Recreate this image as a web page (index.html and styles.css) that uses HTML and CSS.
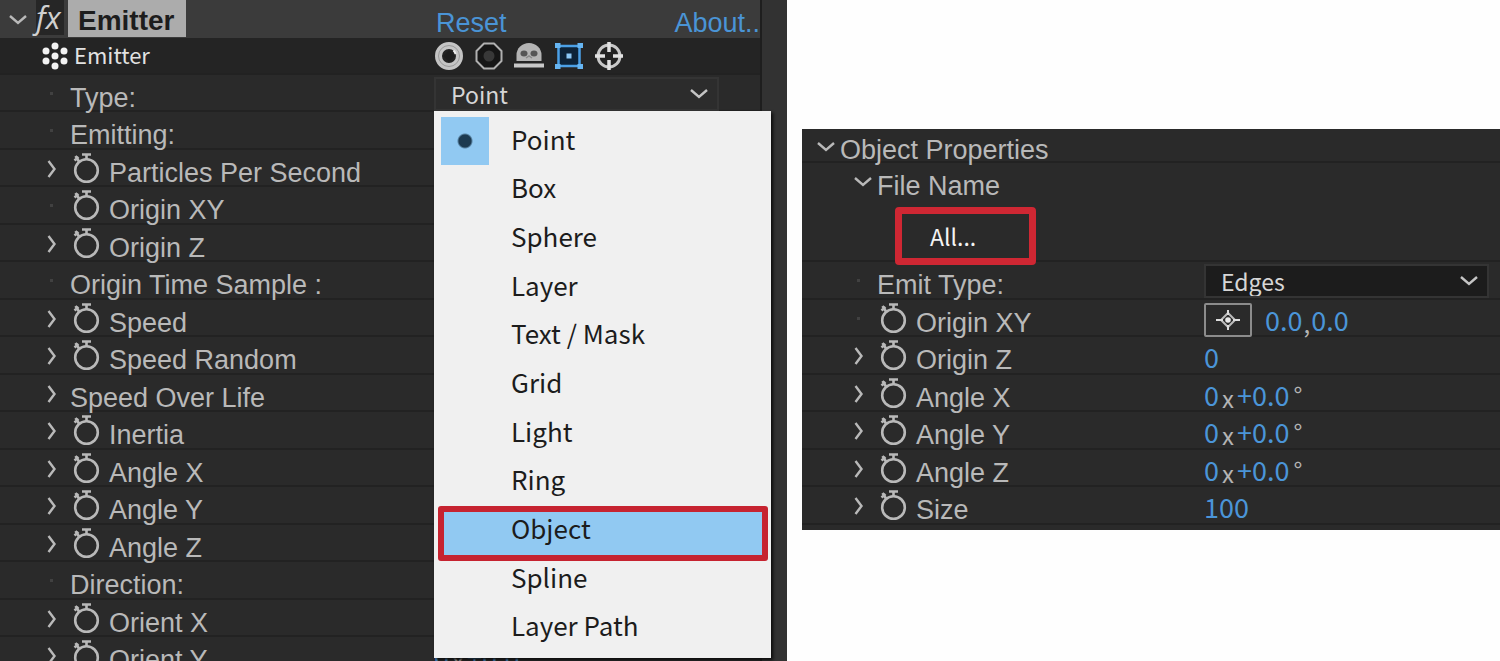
FILE: index.html
```
<!DOCTYPE html>
<html lang="en">
<head>
    <meta charset="UTF-8">
    <meta name="viewport" content="width=device-width, initial-scale=1.0">
    <title>Emitter</title>
    <link rel="stylesheet" href="styles.css">
</head>
<body>

    <!-- Shared icons -->
    <svg class="sprite" aria-hidden="true">
        <symbol id="icon-right" viewBox="0 0 24 24">
            <path d="M8.500 4L14.500 12L8.500 20" fill="none" stroke="currentColor" stroke-width="2.400"/>
        </symbol>
        <symbol id="icon-down" viewBox="0 0 24 24">
            <path d="M4 8L12 15L20 8" fill="none" stroke="currentColor" stroke-width="2.400"/>
        </symbol>
        <symbol id="icon-watch" viewBox="0 0 32 32">
            <circle cx="16.500" cy="17.500" r="11.300" fill="none" stroke="currentColor" stroke-width="2.600"/>
            <path d="M12 1.500H21M16.500 1.500V6M5.500 3L9 8.500M4.500 7.500L8.500 4" fill="none" stroke="currentColor" stroke-width="2.600"/>
        </symbol>
    </svg>

    <main class="container">
        <section class="panel emitter">
            <div class="content">
                <header class="row header">
                    <div class="name">
                        <button class="toggle" aria-label="Collapse effect"><svg><use href="#icon-down"/></svg></button>
                        <span class="fx">fx</span>
                        <h1>Emitter</h1>
                    </div>
                    <div class="value links">
                        <a href="#">Reset</a>
                        <a href="#">About..</a>
                    </div>
                </header>

                <div class="row toolbar">
                    <div class="name">
                        <svg class="dots" viewBox="0 0 26 28" fill="#f2f2f2">
                            <circle cx="13" cy="4" r="3.500"/><circle cx="4" cy="9" r="3.500"/><circle cx="22" cy="9" r="3.500"/>
                            <circle cx="13" cy="14" r="3.500"/><circle cx="4" cy="19" r="3.500"/><circle cx="22" cy="19" r="3.500"/>
                            <circle cx="13" cy="24" r="3.500"/>
                        </svg>
                        <span class="plugin">Emitter</span>
                    </div>
                    <div class="value tools">
                        <button aria-label="Solid"><svg viewBox="0 0 30 30">
                            <circle cx="15" cy="15" r="10.500" fill="#222" stroke="#c4c4c4" stroke-width="7"/>
                            <circle cx="15" cy="15" r="10.500" fill="none" stroke="#999" stroke-width="1"/>
                            <path d="M15 9L21 15L15 21L9 15Z" fill="#1c1c1c"/>
                            <path d="M19.500 9.500A7 7 0 0 1 21.500 13" fill="none" stroke="#eee" stroke-width="2"/>
                        </svg></button>
                        <button aria-label="Ring"><svg viewBox="0 0 30 30">
                            <path d="M10 2.500H20L27.500 10V20L20 27.500H10L2.500 20V10Z" fill="#161616" stroke="#b0b0b0" stroke-width="2" stroke-linejoin="round"/>
                            <circle cx="15" cy="15" r="5.500" fill="#383838"/>
                        </svg></button>
                        <button aria-label="Ghost"><svg viewBox="0 0 30 30">
                            <path d="M2.500 20V14A12.500 12 0 0 1 27.500 14V20Z" fill="#b4b4b4"/>
                            <ellipse cx="10" cy="12.500" rx="3.500" ry="3" fill="#555"/><ellipse cx="20" cy="12.500" rx="3.500" ry="3" fill="#555"/>
                            <path d="M0 24.500H30" stroke="#c8c8c8" stroke-width="4"/>
                            <path d="M12 17L15 15L18 17" fill="none" stroke="#888" stroke-width="1.500"/>
                        </svg></button>
                        <button aria-label="Bounds"><svg viewBox="0 0 30 30">
                            <rect x="4.500" y="5" width="21" height="20" fill="#0d2338" stroke="#4ba0e6" stroke-width="2.500"/>
                            <path d="M1 2H6.500V7H1ZM23.500 2H29V7H23.500ZM1 23H6.500V28H1ZM23.500 23H29V28H23.500Z" fill="#66b5f2"/>
                            <rect x="12.500" y="12.500" width="5" height="5" fill="#8cc8f5"/>
                        </svg></button>
                        <button aria-label="Target"><svg viewBox="0 0 30 30">
                            <circle cx="15" cy="15" r="11" fill="#222" stroke="#c8c8c8" stroke-width="3"/>
                            <path d="M15 1V11M15 19V29M1 15H11M19 15H29" stroke="#e2e2e2" stroke-width="3.500"/>
                        </svg></button>
                    </div>
                </div>

                <div class="props">
                    <div class="row">
                        <div class="name"><i class="tick"></i><label for="type">Type:</label></div>
                        <div class="value">
                            <div class="dropdown open">
                                <select id="type"><option>Point</option></select>
                                <svg class="caret"><use href="#icon-down"/></svg>
                                <div class="menu" role="menu" aria-label="Type">
                                    <button class="checked" role="menuitemradio" aria-checked="true">Point</button>
                                    <button role="menuitemradio">Box</button>
                                    <button role="menuitemradio">Sphere</button>
                                    <button role="menuitemradio">Layer</button>
                                    <button role="menuitemradio">Text / Mask</button>
                                    <button role="menuitemradio">Grid</button>
                                    <button role="menuitemradio">Light</button>
                                    <button role="menuitemradio">Ring</button>
                                    <button class="active" role="menuitemradio">Object</button>
                                    <button role="menuitemradio">Spline</button>
                                    <button role="menuitemradio">Layer Path</button>
                                </div>
                            </div>
                        </div>
                    </div>
                    <div class="row"><div class="name"><i class="tick"></i><span class="label">Emitting:</span></div></div>
                    <div class="row"><div class="name"><button class="toggle" aria-label="Expand"><svg><use href="#icon-right"/></svg></button><svg class="watch"><use href="#icon-watch"/></svg><span class="label">Particles Per Second</span></div></div>
                    <div class="row"><div class="name"><i class="tick"></i><svg class="watch"><use href="#icon-watch"/></svg><span class="label">Origin XY</span></div></div>
                    <div class="row"><div class="name"><button class="toggle" aria-label="Expand"><svg><use href="#icon-right"/></svg></button><svg class="watch"><use href="#icon-watch"/></svg><span class="label">Origin Z</span></div></div>
                    <div class="row"><div class="name"><i class="tick"></i><span class="label">Origin Time Sample :</span></div></div>
                    <div class="row"><div class="name"><button class="toggle" aria-label="Expand"><svg><use href="#icon-right"/></svg></button><svg class="watch"><use href="#icon-watch"/></svg><span class="label">Speed</span></div></div>
                    <div class="row"><div class="name"><button class="toggle" aria-label="Expand"><svg><use href="#icon-right"/></svg></button><svg class="watch"><use href="#icon-watch"/></svg><span class="label">Speed Random</span></div></div>
                    <div class="row"><div class="name"><button class="toggle" aria-label="Expand"><svg><use href="#icon-right"/></svg></button><span class="label">Speed Over Life</span></div></div>
                    <div class="row"><div class="name"><button class="toggle" aria-label="Expand"><svg><use href="#icon-right"/></svg></button><svg class="watch"><use href="#icon-watch"/></svg><span class="label">Inertia</span></div></div>
                    <div class="row"><div class="name"><button class="toggle" aria-label="Expand"><svg><use href="#icon-right"/></svg></button><svg class="watch"><use href="#icon-watch"/></svg><span class="label">Angle X</span></div></div>
                    <div class="row"><div class="name"><button class="toggle" aria-label="Expand"><svg><use href="#icon-right"/></svg></button><svg class="watch"><use href="#icon-watch"/></svg><span class="label">Angle Y</span></div></div>
                    <div class="row"><div class="name"><button class="toggle" aria-label="Expand"><svg><use href="#icon-right"/></svg></button><svg class="watch"><use href="#icon-watch"/></svg><span class="label">Angle Z</span></div></div>
                    <div class="row"><div class="name"><i class="tick"></i><span class="label">Direction:</span></div></div>
                    <div class="row"><div class="name"><button class="toggle" aria-label="Expand"><svg><use href="#icon-right"/></svg></button><svg class="watch"><use href="#icon-watch"/></svg><span class="label">Orient X</span></div></div>
                    <div class="row">
                        <div class="name"><button class="toggle" aria-label="Expand"><svg><use href="#icon-right"/></svg></button><svg class="watch"><use href="#icon-watch"/></svg><span class="label">Orient Y</span></div>
                        <div class="value number">0<small>x</small>+0.0</div>
                    </div>
                </div>
            </div>
        </section>

        <section class="panel object">
            <div class="row group">
                <div class="name"><button class="toggle" aria-label="Collapse"><svg><use href="#icon-down"/></svg></button><h2>Object Properties</h2></div>
            </div>
            <div class="row subgroup">
                <div class="name"><button class="toggle" aria-label="Collapse"><svg><use href="#icon-down"/></svg></button><span class="label">File Name</span></div>
            </div>
            <div class="row file">
                <button class="all">All...</button>
            </div>

            <div class="props">
                <div class="row">
                    <div class="name"><i class="tick"></i><label for="emit-type">Emit Type:</label></div>
                    <div class="value">
                        <div class="dropdown">
                            <select id="emit-type"><option>Edges</option></select>
                            <svg class="caret"><use href="#icon-down"/></svg>
                        </div>
                    </div>
                </div>
                <div class="row">
                    <div class="name"><i class="tick"></i><svg class="watch"><use href="#icon-watch"/></svg><span class="label">Origin XY</span></div>
                    <div class="value number">
                        <button class="pick" aria-label="Pick point"><svg viewBox="0 0 26 22">
                            <path d="M13 4L20 11L13 18L6 11Z" fill="none" stroke="#bbb" stroke-width="2"/>
                            <path d="M13 1V6M13 16V21M1 11H8M18 11H25" stroke="#ddd" stroke-width="2"/>
                            <circle cx="13" cy="11" r="2.800" fill="#e8e8e8"/>
                        </svg></button>
                        <span>0.0</span><small class="comma">,</small><span>0.0</span>
                    </div>
                </div>
                <div class="row">
                    <div class="name"><button class="toggle" aria-label="Expand"><svg><use href="#icon-right"/></svg></button><svg class="watch"><use href="#icon-watch"/></svg><span class="label">Origin Z</span></div>
                    <div class="value number">0</div>
                </div>
                <div class="row">
                    <div class="name"><button class="toggle" aria-label="Expand"><svg><use href="#icon-right"/></svg></button><svg class="watch"><use href="#icon-watch"/></svg><span class="label">Angle X</span></div>
                    <div class="value number">0<small>x</small>+0.0<small class="degree">°</small></div>
                </div>
                <div class="row">
                    <div class="name"><button class="toggle" aria-label="Expand"><svg><use href="#icon-right"/></svg></button><svg class="watch"><use href="#icon-watch"/></svg><span class="label">Angle Y</span></div>
                    <div class="value number">0<small>x</small>+0.0<small class="degree">°</small></div>
                </div>
                <div class="row">
                    <div class="name"><button class="toggle" aria-label="Expand"><svg><use href="#icon-right"/></svg></button><svg class="watch"><use href="#icon-watch"/></svg><span class="label">Angle Z</span></div>
                    <div class="value number">0<small>x</small>+0.0<small class="degree">°</small></div>
                </div>
                <div class="row">
                    <div class="name"><button class="toggle" aria-label="Expand"><svg><use href="#icon-right"/></svg></button><svg class="watch"><use href="#icon-watch"/></svg><span class="label">Size</span></div>
                    <div class="value number">100</div>
                </div>
            </div>
        </section>
    </main>

</body>
</html>
```
FILE: styles.css
```
* {
    box-sizing: border-box;
}

body {
    margin: 0;
    height: 100vh;
    overflow: hidden;
    background: #fefefe;
    color: #b9b9b9;
    font-family: "Liberation Sans", Arial, sans-serif;
    font-size: 27px;
    line-height: 30px;
}

button {
    padding: 0;
    border: 0;
    background: none;
    color: inherit;
    font: inherit;
}

svg {
    display: block;
}

.sprite {
    display: none;
}

.container {
    display: grid;
    grid-template-columns: 787fr 698fr;
    gap: 15px;
    align-items: start;
}

.panel {
    background: #2a2a2a;
}

.emitter {
    padding-right: 25px;
    background: #323232;
}

.content {
    border-right: 2px solid #1e1e1e;
    background: #2a2a2a;
}

/* Rows */
.row {
    display: grid;
    grid-template-columns: 434fr 326fr;
    height: 38px;
    border-bottom: 2px solid #222;
}

.props .row:nth-child(odd) {
    height: 37px;
}

.object .props .row:nth-child(odd) {
    height: 38px;
}

.object .props .row:nth-child(even) {
    height: 37px;
}

.name {
    display: flex;
    align-items: center;
    padding-left: 40px;
    white-space: nowrap;
}

.object .name {
    padding-left: 45px;
}

.name .label,
.name label {
    padding-top: 8px;
}

.toggle,
.tick {
    flex: none;
    width: 24px;
    height: 24px;
    margin-right: 6px;
}

.toggle svg,
.caret {
    width: 24px;
    height: 24px;
}

.tick::before {
    content: "";
    display: block;
    width: 3px;
    height: 3px;
    margin: 10px;
    background: #414141;
}

.watch {
    flex: none;
    width: 32px;
    height: 32px;
    margin-right: 7px;
}

.value {
    display: flex;
    align-items: center;
    font-family: "Noto Sans CJK KR", "Noto Sans", sans-serif;
}

/* Effect header */
.header {
    border: 0;
    background: #3b3b3b;
}

.header .name {
    align-items: stretch;
    padding-left: 6px;
}

.header .toggle {
    margin-top: 8px;
}

.fx {
    width: 28px;
    margin-bottom: 4px;
    background: #262626;
    color: #d0d0d0;
    font-family: "Open Sans", sans-serif;
    font-style: italic;
    font-size: 31px;
    line-height: 35px;
}

h1 {
    margin: 0 0 2px 4px;
    padding: 6px 12px 0 10px;
    background: #acacac;
    color: #1d1d1d;
    font-size: 28px;
}

.links {
    justify-content: space-between;
    padding: 6px 0 0 2px;
    font-family: "Liberation Sans", Arial, sans-serif;
}

.links a {
    color: #4a94d6;
    text-decoration: none;
}

.toolbar {
    height: 37px;
    background: #242424;
}

.dots {
    width: 26px;
    height: 28px;
    margin: 0 6px 0 2px;
}

.plugin {
    padding-bottom: 3px;
    color: #e2e2e2;
    font-family: "Noto Sans CJK KR", "Noto Sans", sans-serif;
    font-size: 22px;
}

.tools {
    gap: 10px;
}

.tools svg {
    width: 30px;
    height: 30px;
}

/* Dropdowns */
.dropdown {
    position: relative;
    width: 285px;
    height: 34px;
}

select {
    width: 100%;
    height: 100%;
    padding: 0 15px;
    border: 2px solid #343434;
    border-radius: 0;
    background: #1c1c1c;
    color: #d6d6d6;
    font: inherit;
    font-size: 23px;
    line-height: 30px;
    appearance: none;
}

.open select {
    background: #2c2c2c;
}

.caret {
    position: absolute;
    top: 5px;
    right: 8px;
    color: #c4c4c4;
    pointer-events: none;
}

.menu {
    position: absolute;
    top: 34px;
    left: 0;
    z-index: 10;
    display: grid;
    grid-auto-rows: 1fr;
    width: 337px;
    height: 547px;
    padding: 6px 0;
    background: #f0f0f0;
    box-shadow: 2px 2px 3px #0c0c0c;
    color: #1c1c1c;
    font-size: 26px;
}

.menu button {
    position: relative;
    padding: 0 0 5px 77px;
    text-align: left;
}

.checked::before {
    content: "";
    position: absolute;
    top: 0;
    left: 7px;
    width: 48px;
    height: 48px;
    background: radial-gradient(circle, #1d3a50 6px, #91c9f2 8px);
}

.active {
    z-index: 0;
}

.active::before {
    content: "";
    position: absolute;
    inset: 0 3px -6px 4px;
    z-index: -1;
    border: 6px solid #c62330;
    border-radius: 3px;
    background: #91c9f2;
}

/* Object properties */
.object {
    margin-top: 129px;
    padding-bottom: 5px;
}

.object .row {
    grid-template-columns: 402fr 296fr;
}

.object .group {
    height: 34px;
}

.object .group .name {
    padding-left: 12px;
}

.object .group .toggle {
    margin-right: 2px;
}

h2 {
    margin: 0;
    padding-top: 6px;
    font-size: 27px;
    font-weight: normal;
}

.object .subgroup .name {
    padding-left: 49px;
}

.subgroup .toggle {
    margin-right: 2px;
}

.object .file {
    display: block;
    height: 61px;
    padding: 6px 93px;
}

.subgroup {
    border: 0;
}

.all {
    width: 141px;
    height: 58px;
    padding-left: 28px;
    border: 7px solid #cf2733;
    border-radius: 4px;
    color: #f4f4f4;
    font-family: "Noto Sans CJK KR", "Noto Sans", sans-serif;
    font-size: 23px;
    text-align: left;
}

.number {
    padding-top: 2px;
    color: #4b95d8;
}

.number small {
    padding: 6px 3px 0;
    color: #b4b4b4;
    font-size: 24px;
}

.number .degree {
    padding: 0 4px;
}

.number .comma {
    padding: 6px 1px 0;
}

.pick {
    width: 48px;
    height: 34px;
    margin-right: 13px;
    padding: 4px 9px;
    border: 2px solid #8c8c8c;
    border-radius: 2px;
}

.pick svg {
    width: 26px;
    height: 22px;
}
```
